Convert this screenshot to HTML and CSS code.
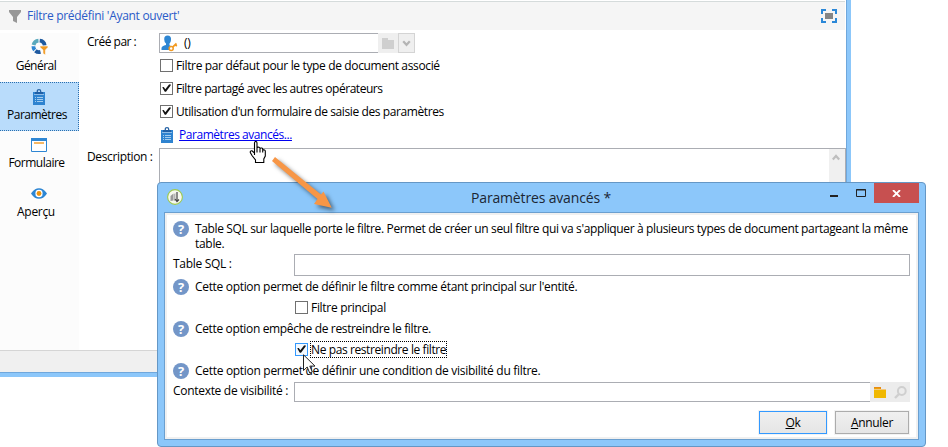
FILE: index.html
```html
<!DOCTYPE html>
<html lang="fr">
<head>
<meta charset="utf-8">
<title>Paramètres avancés</title>
<link rel="stylesheet" href="styles.css">
</head>
<body>
<svg class="defs" width="0" height="0">
  <symbol id="clipboard" viewBox="0 0 12 16">
    <path d="M0 3h12v13H0z" fill="#2e83d0"/>
    <path d="M2 3h8v2H2z" fill="#1f5fa6"/>
    <path d="M4.300 3.500V2.200Q4.300.700 6 .700t1.700 1.500v1.300" fill="none" stroke="#2663a5" stroke-width="1.300"/>
    <path d="M1 5.500h10" stroke="#8dbce8"/>
    <path d="M2 8.500h1M4 8.500h6M2 10.500h1M4 10.500h6M2 12.500h1M4 12.500h6" stroke="#a4cdef"/>
  </symbol>
  <symbol id="check" viewBox="0 0 11 11">
    <path d="M1.200 4.200 2.800 4 4.300 6.200 8 1.600 9.500 1.300 9.800 2.200 5 8.700 3.800 8.700z" fill="#111"/>
  </symbol>
</svg>
<main class="window">
  <header class="head">
    <svg class="funnel" width="14" height="15" viewBox="0 0 14 15"><path d="M1 1h12v2L9 8v6l-4-2V8L1 3z" fill="#979797"/></svg>
    <h1>Filtre prédéfini 'Ayant ouvert'</h1>
    <svg class="full" width="16" height="14" viewBox="0 0 16 14"><path d="M1 5V1h4M11 1h4v4M15 9v4h-4M5 13H1V9" fill="none" stroke="#2b88d8" stroke-width="2"/><path d="M4 4h8v6H4z" fill="#858585"/></svg>
  </header>
  <div class="body">
    <nav class="side">
      <a class="tab t1">
        <svg width="17" height="17" viewBox="0 0 17 17"><g fill="none" stroke-width="3.800"><path d="M8.700 2.700A5.600 5.600 0 0 1 13.700 7.500" stroke="#1f5aa0"/><path d="M2.500 7A5.600 5.600 0 0 1 7.500 2.700" stroke="#5aa9bd"/><path d="M3.700 12A5.600 5.600 0 0 1 2.400 8.200" stroke="#2e86d3"/><path d="M9.500 13.900A5.600 5.600 0 0 1 4.400 12.700" stroke="#1f5aa0"/></g><path d="M9 8h8v1.300l-2.600 2.800V17l-2.400-1.500v-3.400L9 9.300z" fill="#f29a22" stroke="#fcfcfc" stroke-width=".6"/></svg>
        <span class="snug">Général</span>
      </a>
      <a class="tab t2 on">
        <svg width="12" height="16"><use href="#clipboard"/></svg>
        <span class="snug">Paramètres</span>
      </a>
      <a class="tab t3">
        <svg width="16" height="14" viewBox="0 0 16 14"><path d="M.5.5h15v13H.5z" fill="#fff" stroke="#2e86d3"/><path d="M0 0h16v3H0z" fill="#2e86d3"/><path d="M3 5h10" stroke="#f29a22" stroke-width="1.400"/></svg>
        <span class="snug">Formulaire</span>
      </a>
      <a class="tab t4">
        <svg width="16" height="11" viewBox="0 0 16 11"><path d="M1 5.500Q4 1 8 1t7 4.500Q12 10 8 10T1 5.500z" fill="#fff" stroke="#2e86d3" stroke-width="1.600"/><path d="M1 5.500Q2.500 2 6 1.300 2.500 5.500 6 9.700 2.500 9 1 5.500zM15 5.500Q13.500 2 10 1.300 13.500 5.500 10 9.700 13.500 9 15 5.500z" fill="#2e86d3"/><circle cx="8" cy="5.500" r="2.400" fill="#ef9410"/></svg>
        <span>Aperçu</span>
      </a>
    </nav>
    <section class="form">
      <div class="row author">
        <label class="lab snug">Créé par :</label>
        <div class="field">
          <svg width="17" height="17" viewBox="0 0 17 17"><path d="M6.500.5Q10.500.5 10 5 9.800 7.500 8.500 8.500v1.800l2.500 1.200v3.500H.5v-2q.3-1.800 4.500-2.900V8.500Q3.200 7 3.200 4.200 3.200.5 6.500.5z" fill="#2e86d3"/><path d="m10.800 12.800 4.700-4.300m-1.300 1.200 1.600 1.400" stroke="#f29a22" stroke-width="1.700" fill="none"/><circle cx="10.200" cy="13.500" r="2" fill="#fff" stroke="#f29a22" stroke-width="1.500"/></svg>
          <span>()</span>
        </div>
        <div class="pick"><svg width="12" height="11" viewBox="0 0 12 11"><path d="M0 0h6v2h6v9H0z" fill="#cfcfcf"/></svg></div>
        <div class="drop"><svg width="9" height="7" viewBox="0 0 9 7"><path d="m1.200 1.200 3.300 3.600 3.300-3.600" fill="none" stroke="#b4b4b4" stroke-width="2.200"/></svg></div>
      </div>
      <div class="check-row"><i class="box"></i><span class="trim">Filtre par défaut pour le type de document associé</span></div>
      <div class="check-row"><i class="box"><svg width="11" height="11"><use href="#check"/></svg></i><span class="tight">Filtre partagé avec les autres opérateurs</span></div>
      <div class="check-row"><i class="box"><svg width="11" height="11"><use href="#check"/></svg></i><span class="mid">Utilisation d'un formulaire de saisie des paramètres</span></div>
      <div class="link-row"><svg width="12" height="16"><use href="#clipboard"/></svg><a class="tight">Paramètres avancés...</a></div>
      <div class="row desc">
        <label class="lab">Description :</label>
        <div class="area"><div class="scroll"><svg width="8" height="7" viewBox="0 0 8 7"><path d="M.8 5.500 4 2l3.200 3.500" fill="none" stroke="#bebebe" stroke-width="2.200"/></svg></div></div>
      </div>
    </section>
  </div>
  <footer class="status"></footer>
</main>

<section class="dialog">
  <header class="title">
    <svg class="logo" width="16" height="16" viewBox="0 0 16 16"><circle cx="8" cy="8" r="7.400" fill="#f6f8ef" stroke="#9cc84f" stroke-width="1.100"/><path d="M3.500 7 6.500 4.500v7L3.500 12z" fill="#999"/><path d="M7 5 8.500 4v7.500L7 12z" fill="#b5b5b5"/><path d="M10 3v8.500M8 10l2 2.500 2-2" stroke="#444" fill="none" stroke-width="1.200"/></svg>
    <h2>Paramètres avancés *</h2>
    <div class="controls">
      <svg width="8" height="2"><path d="M0 0h8v2H0z" fill="#222"/></svg>
      <svg width="10" height="8" viewBox="0 0 10 8"><path d="M.5.5h9v7h-9zM0 1h10" fill="none" stroke="#222"/></svg>
      <div class="close"><svg width="9" height="7" viewBox="0 0 9 7"><path d="M1 0 8 7M8 0 1 7" stroke="#fff" stroke-width="1.800"/></svg></div>
    </div>
  </header>
  <div class="client">
    <div class="help two"><b class="q">?</b><p><span class="trim">Table SQL sur laquelle porte le filtre. Permet de créer un seul filtre qui va s'appliquer à plusieurs types de document partageant la même</span><br>table.</p></div>
    <div class="line sql"><label>Table SQL :</label><div class="input"></div></div>
    <div class="help"><b class="q">?</b><p class="slight">Cette option permet de définir le filtre comme étant principal sur l'entité.</p></div>
    <div class="opt"><i class="box"></i><span>Filtre principal</span></div>
    <div class="help"><b class="q">?</b><p class="trim">Cette option empêche de restreindre le filtre.</p></div>
    <div class="opt"><i class="box hot"><svg width="11" height="11"><use href="#check"/></svg></i><span class="focus mid">Ne pas restreindre le filtre</span></div>
    <div class="help"><b class="q">?</b><p>Cette option permet de définir une condition de visibilité du filtre.</p></div>
    <div class="line ctx"><label>Contexte de visibilité :</label><div class="input open"></div>
      <div class="tool"><svg width="12" height="11" viewBox="0 0 12 11"><path d="M0 0h7v2H0z" fill="#e88a12"/><path d="M0 1.500h6V2h6v9H0z" fill="#f0b800"/><path d="M0 2h12v1H0z" fill="#f3c87c"/></svg></div>
      <div class="tool"><svg width="13" height="13" viewBox="0 0 13 13"><circle cx="7.800" cy="5" r="3.900" fill="none" stroke="#cfcfcf" stroke-width="2"/><path d="M1 12l4-4" stroke="#cfcfcf" stroke-width="2.400"/></svg></div>
    </div>
    <div class="actions"><button class="ok"><u>O</u>k</button><button class="cancel"><u>A</u>nnuler</button></div>
  </div>
</section>

<svg class="hand" width="18" height="23" viewBox="0 0 18 23"><path d="M5.500 14V2Q5.500.5 6.700.5T8 2v6.500V6.500q2.500-1 3 .7v1-1q2.300-.8 2.700.8v1q2.300-.6 2.600 1V15l-1.500 3v3.500H6.500V19L3 14.500 1.300 11.500Q1 9.500 3 9.800L5.500 12M8 7v4.500M11 8v3.500M13.700 9v2.500" fill="#fff" stroke="#000" stroke-width="1.100"/></svg>
<svg class="arrow" width="70" height="62" viewBox="0 0 70 62"><path d="M7 7 53 44.500 55.500 41.500 63.700 57.700 46 54 49.500 49 4 11z" fill="#f79646"/></svg>
<svg class="pointer" width="13" height="20" viewBox="0 0 13 20"><path d="M.5.800v15.700l3.700-3.500 2.500 6 2.600-1.100-2.500-5.800h5.200z" fill="#fff" stroke="#222" stroke-width="1"/></svg>
</body>
</html>
```
FILE: styles.css
```css
* { box-sizing: border-box; }
body {
  margin: 0;
  width: 948px;
  height: 447px;
  overflow: hidden;
  position: relative;
  background: #fff;
  color: #000;
  font: 12px/16px "Open Sans", "Noto Sans", sans-serif;
  letter-spacing: -0.3px;
  white-space: nowrap;
}
h1, h2, p { margin: 0; font: inherit; }
svg { display: block; flex: none; }
.defs { position: absolute; }
.slight { letter-spacing: -0.32px; }
.trim { letter-spacing: -0.355px; }
.mid { letter-spacing: -0.4px; }
.tight { letter-spacing: -0.45px; }
.snug { letter-spacing: -0.5px; }

.window {
  width: 851px;
  height: 377px;
  border-right: 4px solid #8cc7fa;
  border-bottom: 4px solid #8cc7fa;
  display: flex;
  flex-direction: column;
  box-shadow: inset -1px -1px #6fa7dc;
  padding: 1px 1px 1px 0;
}
.head {
  height: 29px;
  margin-right: 1px;
  padding: 0 8px;
  border-top: 1px solid #d5dbdb;
  background: #f5f5f5;
  display: flex;
  align-items: center;
  color: #2a5bc8;
}
.head h1 { margin-left: 5px; }
.full { margin-left: auto; }
.body { height: 320px; display: flex; padding-top: 3px; }
.side { width: 79px; background: #fcfcfc; }
.tab { display: flex; flex-direction: column; align-items: center; }
.t1 { height: 49px; padding-top: 5px; margin-right: 1px; }
.t1 span { margin-top: 3px; margin-right: 6px; }
.t2 { height: 49px; padding-top: 6px; }
.t2 span { margin-top: 2px; margin-right: 4px; }
.t3 { height: 50px; padding-top: 7px; margin-right: 1px; }
.t3 span { margin-top: 3px; margin-right: 5px; }
.t4 { padding-top: 7px; margin-right: 1px; }
.t4 span { margin-top: 5px; margin-right: 6px; }
.on { background: #b9dcfb; border: 1px dotted #2b6fae; border-left: 0; }
.form { flex: 1; padding-left: 8px; }
.row { display: flex; }
.lab { width: 72px; flex: none; }
.author { height: 21px; }
.author .lab { padding-top: 1px; }
.field {
  width: 219px;
  height: 20px;
  border: 1px solid #abadb3;
  border-right: 0;
  display: flex;
  align-items: center;
  padding-left: 1px;
  gap: 6px;
}
.pick { width: 20px; height: 20px; background: #efefef; display: grid; place-items: center; }
.drop { width: 17px; height: 20px; background: #efefef; border: 1px solid #d4d4d4; display: grid; place-items: center; }
.check-row { height: 23px; margin-left: 73px; display: flex; align-items: center; gap: 3px; }
.box {
  width: 13px;
  height: 13px;
  border: 1px solid #707070;
  background: #fff;
  flex: none;
}
.hot { border-color: #3399ff; background: #f3f9ff; }
.link-row { height: 25px; margin-left: 74px; padding-top: 4px; display: flex; gap: 6px; color: #0000f0; }
.link-row a { text-decoration: underline; }
.desc { height: 202px; }
.desc .lab { padding-top: 1px; letter-spacing: -0.36px; }
.area { flex: 1; border: 1px solid #abadb3; height: 201px; display: flex; justify-content: flex-end; }
.scroll { width: 16px; background: #f0f0f0; padding: 5px 0 0 3px; }
.status { flex: 1; background: #f0f0f0; border-top: 1px solid #d5d5d5; }

.dialog {
  position: absolute;
  left: 157px;
  top: 182px;
  width: 769px;
  height: 265px;
  border: 1px solid #6597c5;
  border-radius: 4px;
  background: #8cc7fa;
  padding: 0 6px 6px;
}
.title { height: 29px; display: flex; align-items: flex-start; }
.logo { margin: 6px 0 0 3px; }
.title h2 { font-size: 14px; line-height: 20px; letter-spacing: -0.16px; margin: 5px 0 0 288px; color: #1b2633; }
.controls { margin-left: auto; display: flex; align-items: flex-start; }
.controls > svg:first-child { margin: 12px 18px 0 0; }
.controls > svg:nth-child(2) { margin: 6px 8px 0 0; }
.close { width: 45px; height: 20px; background: #c75050; display: grid; place-items: center; }
.client {
  height: 228px;
  border: 1px solid #6b9fcf;
  box-shadow: inset 0 0 0 2px #f0f0f0;
  background: #fff;
  padding: 8px 8px 0;
}
.help { display: flex; gap: 6px; height: 21px; }
.help.two { height: 33px; }
.help p { line-height: 15px; }
.q {
  width: 16px;
  height: 16px;
  flex: none;
  border-radius: 50%;
  background: #7396c8;
  color: #fff;
  text-align: center;
  font-size: 13px;
  letter-spacing: 0;
  line-height: 16px;
}
.line { display: flex; }
.line label { width: 121px; flex: none; }
.input { flex: 1; border: 1px solid #abadb3; }
.sql { height: 25px; }
.sql label { padding-top: 2px; }
.sql .input { height: 22px; }
.opt { height: 21px; margin-left: 122px; display: flex; align-items: flex-start; gap: 3px; padding-top: 1px; }
.opt span { line-height: 15px; margin-top: -1px; }
.focus { outline: 1px dotted #000; }
.open { border-right: 0; }
.ctx { height: 20px; margin-top: -2px; }
.ctx label { padding-top: 1px; }
.tool { width: 20px; background: #ececec; display: grid; place-items: center; }
.actions { display: flex; justify-content: flex-end; gap: 8px; margin-top: 9px; }
button {
  height: 23px;
  padding: 0;
  font: inherit;
  letter-spacing: inherit;
  background: linear-gradient(#f0f0f0, #e5e5e5);
  border: 1px solid #acacac;
  outline: 1px solid #f3f3f3;
}
.ok { width: 68px; border-color: #3399ff; }
.cancel { width: 74px; margin-right: 1px; }

.hand { position: absolute; left: 249px; top: 141px; }
.arrow { position: absolute; left: 268px; top: 150px; overflow: visible; filter: drop-shadow(3px 3px 2px rgba(0, 0, 0, .5)); }
.pointer { position: absolute; left: 303px; top: 354px; }
```
